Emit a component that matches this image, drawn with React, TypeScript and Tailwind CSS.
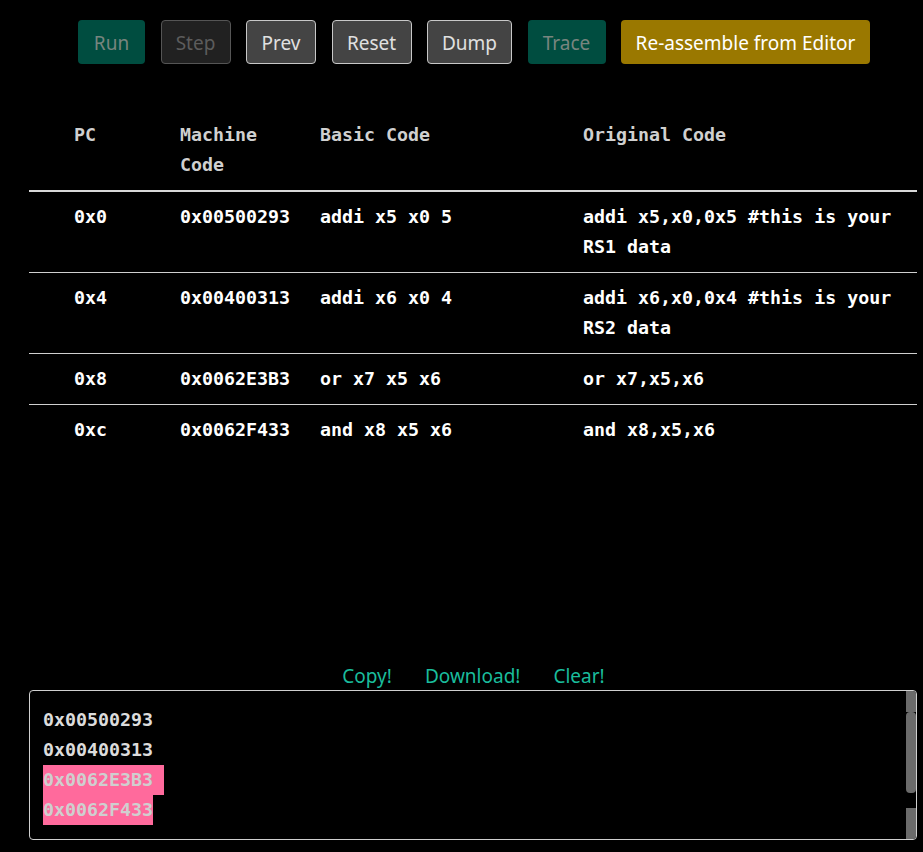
import React from 'react';

const rows = [
  { pc: '0x0', mc: '0x00500293', basic: 'addi x5 x0 5', orig: 'addi x5,x0,0x5 #this is your RS1 data' },
  { pc: '0x4', mc: '0x00400313', basic: 'addi x6 x0 4', orig: 'addi x6,x0,0x4 #this is your RS2 data' },
  { pc: '0x8', mc: '0x0062E3B3', basic: 'or x7 x5 x6', orig: 'or x7,x5,x6' },
  { pc: '0xc', mc: '0x0062F433', basic: 'and x8 x5 x6', orig: 'and x8,x5,x6' },
];

const mono = { fontFamily: '"DejaVu Sans Mono", "Liberation Mono", monospace' };

export default function App() {
  return (
    <div
      className="min-h-[852px] bg-black text-white"
      style={{ fontFamily: '"Noto Sans", "Open Sans", sans-serif' }}
    >
      {/* toolbar */}
      <div className="flex gap-[15.5px] pl-[78px] pt-[20px] text-[19px]">
        <button className="h-[44px] w-[67px] rounded-[4px] bg-[#004d40] pt-[2px] text-[#78857f]">Run</button>
        <button className="h-[44px] w-[70px] rounded-[4px] border border-[#555] bg-[#212121] pt-[2px] text-[#5c5c5c]">Step</button>
        <button className="h-[44px] w-[70px] rounded-[4px] border border-[#c8c8c8] bg-[#444] pt-[2px] text-[#e0e0e0]">Prev</button>
        <button className="h-[44px] w-[80px] rounded-[4px] border border-[#c8c8c8] bg-[#444] pt-[2px] text-[#e0e0e0]">Reset</button>
        <button className="h-[44px] w-[85px] rounded-[4px] border border-[#c8c8c8] bg-[#444] pt-[2px] text-[#e0e0e0]">Dump</button>
        <button className="h-[44px] w-[78px] rounded-[4px] bg-[#004d40] pt-[2px] text-[#78857f]">Trace</button>
        <button className="h-[44px] w-[249px] rounded-[4px] bg-[#9a7800] pt-[2px] text-white">Re-assemble from Editor</button>
      </div>

      {/* program table */}
      <div className="ml-[29px] mt-[46px] w-[888px] text-[18.3px] font-bold leading-[30px]" style={mono}>
        <div className="grid grid-cols-[151px_140px_263px_1fr] border-b-2 border-[#d8d8d8] py-[10px] text-[#d0d0d0]">
          <div className="pl-[45px]">PC</div>
          <div className="pr-[20px]">Machine Code</div>
          <div className="pr-[20px]">Basic Code</div>
          <div>Original Code</div>
        </div>
        {rows.map((r, i) => (
          <div
            key={r.pc}
            className={`grid grid-cols-[151px_140px_263px_1fr] py-[10px] ${
              i < rows.length - 1 ? 'border-b border-[#d0d0d0]' : ''
            }`}
          >
            <div className="pl-[45px]">{r.pc}</div>
            <div className="pr-[20px]">{r.mc}</div>
            <div className="pr-[20px]">{r.basic}</div>
            <div>{r.orig}</div>
          </div>
        ))}
      </div>

      {/* output actions */}
      <div className="mt-[209px] flex justify-center gap-[33px] pl-[24px] text-[19px] leading-[24px] text-[#1abc9c]">
        <span>Copy!</span>
        <span>Download!</span>
        <span>Clear!</span>
      </div>

      <div className="relative ml-[29px] mt-[2px] h-[150px] w-[888px] overflow-hidden rounded-[4px] border border-[#d0d0d0]">
        <div className="pl-[13px] pt-[14px] text-[18.3px] font-bold leading-[30px] text-[#dcdcdc]" style={mono}>
          <div>0x00500293</div>
          <div>0x00400313</div>
          <div className="w-fit whitespace-pre bg-[#ff6a9c] text-[#cfcfcf]">0x0062E3B3 </div>
          <div className="w-fit bg-[#ff6a9c] text-[#cfcfcf]">0x0062F433</div>
        </div>
        {/* scrollbar */}
        <div className="absolute right-0 top-0 flex h-full w-[10px] flex-col">
          <div className="h-[21px] bg-[#6b6b6b]" />
          <div className="h-[81px] rounded-[4px] bg-[#6b6b6b]" />
          <div className="h-[15px]" />
          <div className="flex-1 bg-[#6b6b6b]" />
        </div>
      </div>
    </div>
  );
}
